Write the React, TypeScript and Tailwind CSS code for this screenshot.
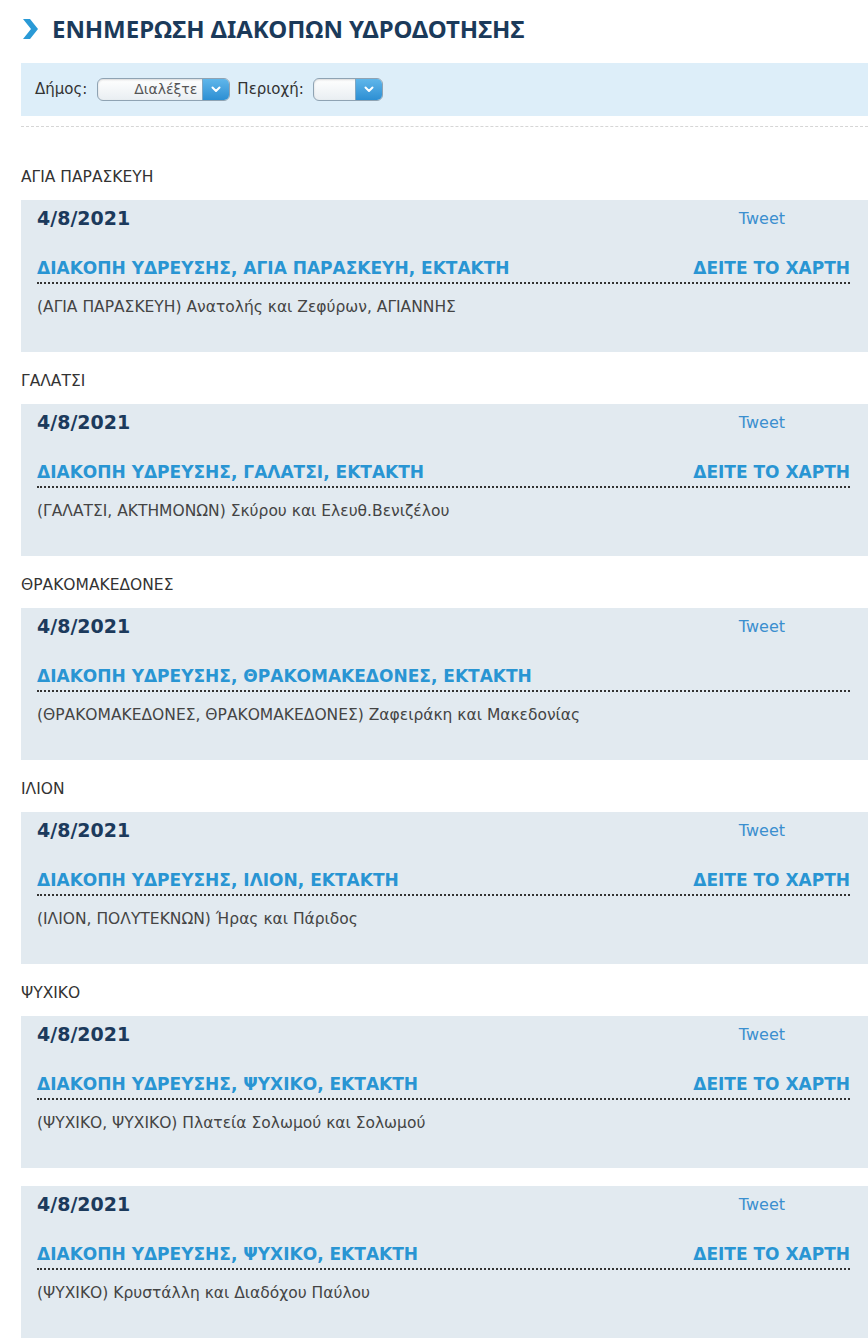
import React from "react";

type Item = {
  label?: string;
  title: string;
  desc: string;
  map: boolean;
};

const items: Item[] = [
  {
    label: "ΑΓΙΑ ΠΑΡΑΣΚΕΥΗ",
    title: "ΔΙΑΚΟΠΗ ΥΔΡΕΥΣΗΣ, ΑΓΙΑ ΠΑΡΑΣΚΕΥΗ, ΕΚΤΑΚΤΗ",
    desc: "(ΑΓΙΑ ΠΑΡΑΣΚΕΥΗ) Ανατολής και Ζεφύρων, ΑΓΙΑΝΝΗΣ",
    map: true,
  },
  {
    label: "ΓΑΛΑΤΣΙ",
    title: "ΔΙΑΚΟΠΗ ΥΔΡΕΥΣΗΣ, ΓΑΛΑΤΣΙ, ΕΚΤΑΚΤΗ",
    desc: "(ΓΑΛΑΤΣΙ, ΑΚΤΗΜΟΝΩΝ) Σκύρου και Ελευθ.Βενιζέλου",
    map: true,
  },
  {
    label: "ΘΡΑΚΟΜΑΚΕΔΟΝΕΣ",
    title: "ΔΙΑΚΟΠΗ ΥΔΡΕΥΣΗΣ, ΘΡΑΚΟΜΑΚΕΔΟΝΕΣ, ΕΚΤΑΚΤΗ",
    desc: "(ΘΡΑΚΟΜΑΚΕΔΟΝΕΣ, ΘΡΑΚΟΜΑΚΕΔΟΝΕΣ) Ζαφειράκη και Μακεδονίας",
    map: false,
  },
  {
    label: "ΙΛΙΟΝ",
    title: "ΔΙΑΚΟΠΗ ΥΔΡΕΥΣΗΣ, ΙΛΙΟΝ, ΕΚΤΑΚΤΗ",
    desc: "(ΙΛΙΟΝ, ΠΟΛΥΤΕΚΝΩΝ) Ήρας και Πάριδος",
    map: true,
  },
  {
    label: "ΨΥΧΙΚΟ",
    title: "ΔΙΑΚΟΠΗ ΥΔΡΕΥΣΗΣ, ΨΥΧΙΚΟ, ΕΚΤΑΚΤΗ",
    desc: "(ΨΥΧΙΚΟ, ΨΥΧΙΚΟ) Πλατεία Σολωμού και Σολωμού",
    map: true,
  },
  {
    title: "ΔΙΑΚΟΠΗ ΥΔΡΕΥΣΗΣ, ΨΥΧΙΚΟ, ΕΚΤΑΚΤΗ",
    desc: "(ΨΥΧΙΚΟ) Κρυστάλλη και Διαδόχου Παύλου",
    map: true,
  },
];

function Select({ width, text }: { width: string; text?: string }) {
  return (
    <div
      className={`flex h-[23px] ${width} items-stretch rounded-[6px] border border-[#8fa3b3] bg-gradient-to-b from-white to-[#e9eef2] shadow-[inset_0_1px_2px_rgba(0,0,0,0.15)] overflow-hidden`}
    >
      <div className="flex flex-1 items-center justify-end pr-[5px] text-[14px] text-[#555]">
        {text}
      </div>
      <div className="flex w-[27px] items-center justify-center bg-gradient-to-b from-[#5fb6ea] to-[#2c8fd3] border-l border-[#7fa6c2]">
        <svg width="10" height="7" viewBox="0 0 10 7">
          <path d="M1.5 1.5 L5 5 L8.5 1.5" fill="none" stroke="white" strokeWidth="2" strokeLinecap="round" strokeLinejoin="round" />
        </svg>
      </div>
    </div>
  );
}

function Card({ item }: { item: Item }) {
  return (
    <div className="h-[152px] bg-[#e2eaf0] pl-[16px] pr-[18px]">
      <div className="flex h-[36px] items-center justify-between">
        <span className="text-[19px] leading-[22px] font-bold text-[#1c3a5c]">4/8/2021</span>
        <span className="mr-[65px] mt-[2px] text-[16px] leading-[20px] text-[#3b8fcf]">Tweet</span>
      </div>
      <div className="mt-[20px] flex h-[28px] items-start justify-between border-b-2 border-dotted border-[#333]">
        <span className="text-[17px] leading-[24px] font-bold text-[#2995d3]">{item.title}</span>
        {item.map && (
          <span className="text-[17px] leading-[24px] font-bold text-[#2995d3]">ΔΕΙΤΕ ΤΟ ΧΑΡΤΗ</span>
        )}
      </div>
      <div className="mt-[13px] text-[15.5px] leading-[20px] text-[#444]">{item.desc}</div>
    </div>
  );
}

export default function App() {
  return (
    <div
      className="min-h-[1339px] w-[868px] bg-white pl-[21px]"
      style={{ fontFamily: "'DejaVu Sans', Verdana, sans-serif" }}
    >
      <div className="flex h-[58px] items-center gap-[14px]">
        <svg width="17" height="20" viewBox="0 0 17 20">
          <path d="M2 0 L9 0 L17 10 L9 20 L2 20 L10 10 Z" fill="#2a9ad6" />
        </svg>
        <h1
          className="text-[24px] font-bold text-[#1b3a5a]"
          style={{ fontFamily: "'Noto Sans', 'DejaVu Sans', sans-serif" }}
        >
          ΕΝΗΜΕΡΩΣΗ ΔΙΑΚΟΠΩΝ ΥΔΡΟΔΟΤΗΣΗΣ
        </h1>
      </div>
      <div className="mt-[5px] flex h-[53px] items-center bg-[#ddeef9] pl-[14px]">
        <span className="mr-[10px] text-[15px] text-[#333]">Δήμος:</span>
        <Select width="w-[133px]" text="Διαλέξτε" />
        <span className="ml-[7px] mr-[9px] text-[15px] text-[#333]">Περιοχή:</span>
        <Select width="w-[70px]" />
      </div>
      <div className="mt-[10px] border-t border-dashed border-[#d6d6d6]" />
      <div className="pt-[40px]">
        {items.map((item, i) => (
          <div key={i}>
            {item.label ? (
              <div className={`${i === 0 ? "" : "mt-[19px]"} mb-[13px] h-[20px] text-[15.5px] leading-[20px] text-[#333]`}>
                {item.label}
              </div>
            ) : (
              <div className="h-[18px]" />
            )}
            <Card item={item} />
          </div>
        ))}
      </div>
    </div>
  );
}
